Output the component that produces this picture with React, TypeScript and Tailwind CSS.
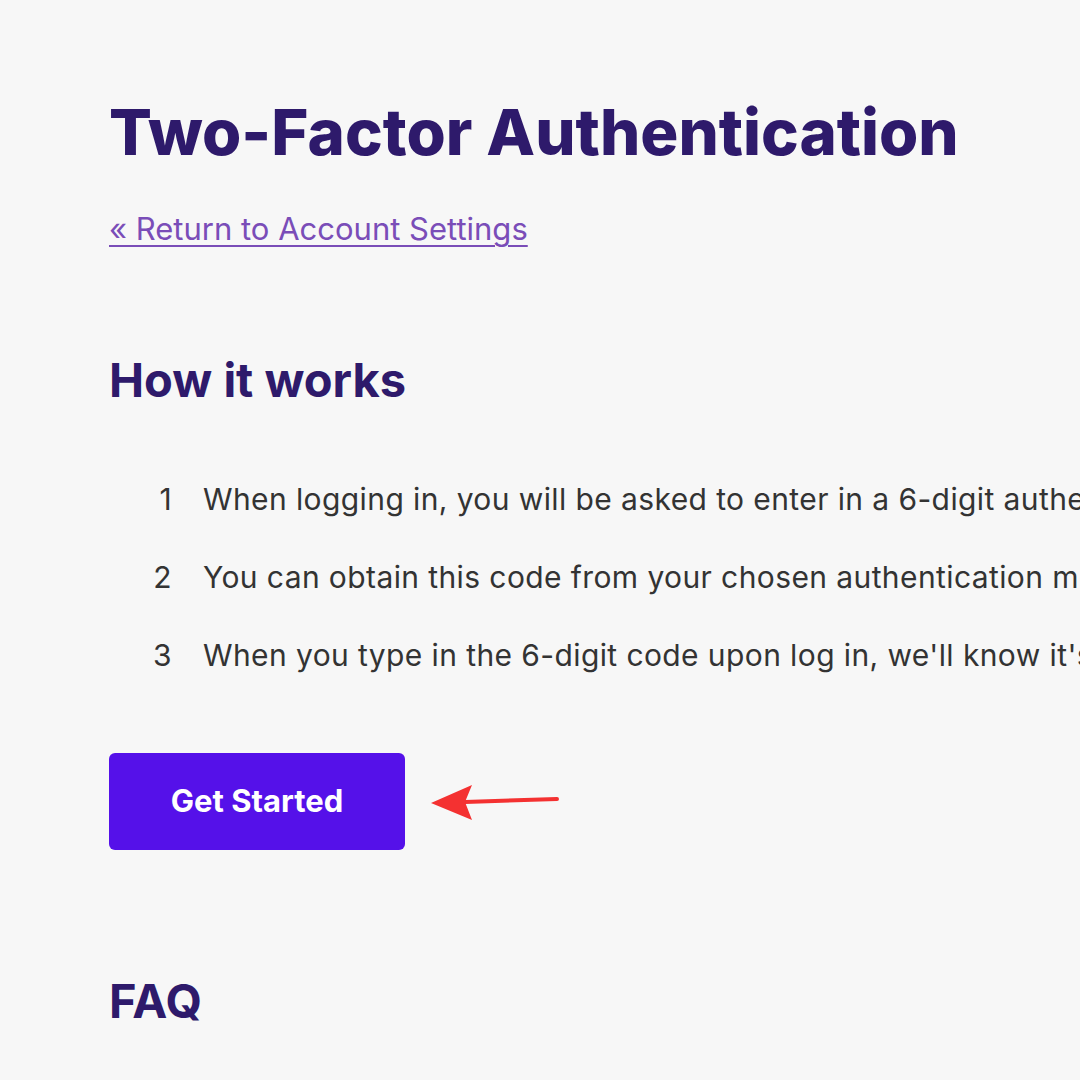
import React from "react";

const steps = [
  "When logging in, you will be asked to enter in a 6-digit authentication code.",
  "You can obtain this code from your chosen authentication method.",
  "When you type in the 6-digit code upon log in, we'll know it's really you.",
];

export default function App() {
  return (
    <div
      className="w-[1080px] h-[1080px] overflow-hidden bg-[#f7f7f7]"
      style={{ fontFamily: "Inter, 'Noto Sans', sans-serif" }}
    >
      <div className="pl-[109px] pt-[94px]">
        <h1 className="text-[63.5px] leading-[76px] font-extrabold text-[#2e1a6b] whitespace-nowrap">
          Two-Factor Authentication
        </h1>

        <a
          href="#"
          className="mt-[39px] inline-block text-[31px] leading-[40px] text-[#7a4db8] underline underline-offset-[5px] decoration-[2px] whitespace-nowrap"
        >
          « Return to Account Settings
        </a>

        <h2 className="mt-[103px] text-[47px] leading-[56px] font-bold text-[#2e1a6b]">
          How it works
        </h2>

        <ol className="mt-[72px] flex flex-col gap-[40px]">
          {steps.map((s, i) => (
            <li key={i} className="flex items-baseline whitespace-nowrap text-[30px] leading-[38px] tracking-[0.4px] text-[#333333]">
              <span className="w-[94px] shrink-0 pr-[31px] text-right">{i + 1}</span>
              <span className="shrink-0">{s}</span>
            </li>
          ))}
        </ol>

        <div className="mt-[79px] flex items-center">
          <button className="w-[296px] h-[97px] rounded-[6px] bg-[#5511e9] text-white text-[31px] font-bold">
            Get Started
          </button>
          <svg width="130" height="40" viewBox="0 0 130 40" className="ml-[26px]">
            <line x1="34" y1="20" x2="126" y2="17" stroke="#f43131" strokeWidth="4" strokeLinecap="round" />
            <polygon points="0,21 41,3 34,20 41,38" fill="#f43131" />
          </svg>
        </div>

        <h2 className="mt-[123px] text-[47px] leading-[56px] font-bold text-[#2e1a6b]">FAQ</h2>
      </div>
    </div>
  );
}
